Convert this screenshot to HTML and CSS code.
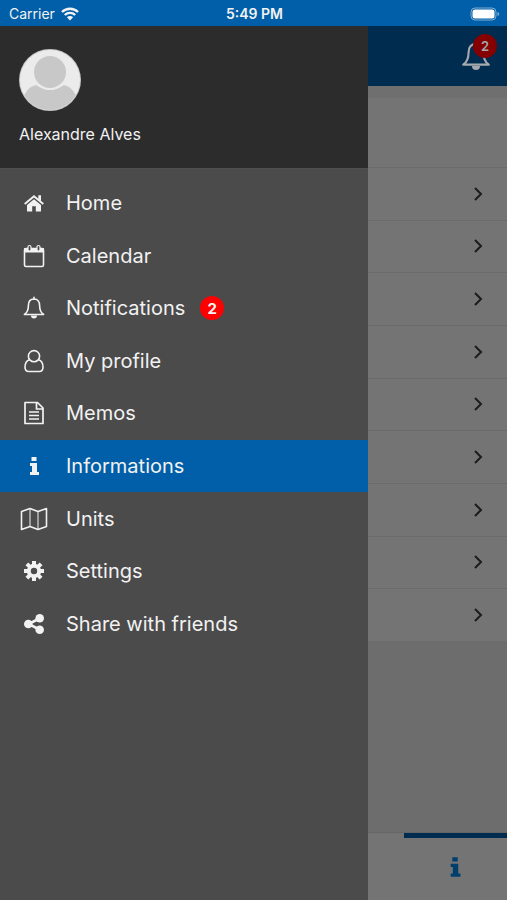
FILE: index.html
```html
<!DOCTYPE html>
<html lang="en">
<head>
    <meta charset="UTF-8">
    <meta name="viewport" content="width=device-width, initial-scale=1.0">
    <title>Informations</title>
    <link rel="stylesheet" href="styles.css">
</head>
<body>
    <!-- Shared icon shapes -->
    <svg class="sprite" aria-hidden="true">
        <symbol id="icon-bell" viewBox="0 0 24 24">
            <path d="M12 1.200v2M12 3c-4 0-5.600 3-5.600 6.500 0 4.500-1 7-4 9h19.200c-3-2-4-4.500-4-9C17.600 6 16 3 12 3z" fill="none" stroke="currentColor" stroke-width="1.600" stroke-linejoin="round" stroke-linecap="round"/>
            <path d="M9 19.500a3 3 0 0 0 6 0z" fill="currentColor"/>
        </symbol>
        <symbol id="icon-info" viewBox="0 0 24 24">
            <path d="M9.500 3h5v4h-5zM8 9h7v9h2v3H8v-3h2v-6H8z" fill="currentColor"/>
        </symbol>
        <symbol id="icon-chevron" viewBox="0 0 10 16">
            <path d="M2 2l6 6-6 6" fill="none" stroke="currentColor" stroke-width="2"/>
        </symbol>
    </svg>

    <div class="status-bar">
        <div class="carrier">
            <span>Carrier</span>
            <svg class="wifi" viewBox="0 0 18 14" aria-hidden="true">
                <path d="M1 5a11.500 11.500 0 0 1 16 0M3.800 8a7.500 7.500 0 0 1 10.400 0" fill="none" stroke="currentColor" stroke-width="2.400"/>
                <path d="M9 13.500L5.900 10.300a4.400 4.400 0 0 1 6.200 0z" fill="currentColor"/>
            </svg>
        </div>
        <div class="time">5:49 PM</div>
        <div class="battery">
            <svg viewBox="0 0 30 14" aria-hidden="true">
                <rect x="1" y="1" width="25" height="12" rx="4" fill="none" stroke="#7fafd4"/>
                <rect x="2.500" y="2.500" width="22" height="9" rx="2.500" fill="#fff"/>
                <path d="M27.500 5v4q1.800-.5 1.800-2t-1.800-2z" fill="#7fafd4"/>
            </svg>
        </div>
    </div>

    <div class="app">
        <aside class="drawer">
            <div class="user">
                <svg class="avatar" viewBox="0 0 62 62" aria-hidden="true">
                    <clipPath id="avatar-clip"><circle cx="31" cy="31" r="30"/></clipPath>
                    <circle cx="31" cy="31" r="31" fill="#c8c8c8"/>
                    <circle cx="31" cy="31" r="30" fill="#ebebeb"/>
                    <g clip-path="url(#avatar-clip)">
                        <path d="M3 52Q7 38 17 36Q31 46 45 36Q55 38 59 52V62H3z" fill="#c8c8c8"/>
                        <circle cx="31" cy="23.500" r="17.500" fill="#ebebeb"/>
                        <circle cx="31" cy="23" r="16" fill="#c8c8c8"/>
                    </g>
                </svg>
                <div class="user-name">Alexandre Alves</div>
            </div>
            <nav class="menu">
                <a href="#home">
                    <svg viewBox="0 0 24 24" aria-hidden="true"><path d="M12 8.200l7 5.800v6.500h-5.200v-5.200h-3.600v5.200H5V14z" fill="currentColor"/><path d="M2.700 13L12 5.300l9.300 7.700" fill="none" stroke="currentColor" stroke-width="1.900"/><path d="M16.300 4.200h2.700v6l-2.700-2.300z" fill="currentColor"/></svg>
                    <span>Home</span>
                </a>
                <a href="#calendar">
                    <svg viewBox="0 0 24 24" aria-hidden="true"><rect x="2.500" y="4.500" width="19" height="18" rx="1.500" fill="none" stroke="currentColor" stroke-width="1.600"/><path d="M2 4h20v4.500H2z" fill="currentColor"/><rect x="6" y="1.500" width="3" height="5.500" rx="1.500" fill="#4b4b4b" stroke="currentColor" stroke-width="1.200"/><rect x="15" y="1.500" width="3" height="5.500" rx="1.500" fill="#4b4b4b" stroke="currentColor" stroke-width="1.200"/></svg>
                    <span>Calendar</span>
                </a>
                <a href="#notifications">
                    <svg aria-hidden="true"><use href="#icon-bell"/></svg>
                    <span>Notifications</span>
                    <b class="badge">2</b>
                </a>
                <a href="#profile">
                    <svg viewBox="0 0 24 24" aria-hidden="true"><g fill="none" stroke="currentColor" stroke-width="1.600"><circle cx="12" cy="7.200" r="5.600"/><path d="M7.600 10.700C4.500 11.500 3 14.500 3 18.300c0 2.600 1.500 4.200 3.800 4.200h10.400c2.300 0 3.800-1.600 3.800-4.200 0-3.800-1.500-6.800-4.600-7.600"/></g></svg>
                    <span>My profile</span>
                </a>
                <a href="#memos">
                    <svg viewBox="0 0 24 24" aria-hidden="true"><g fill="none" stroke="currentColor" stroke-width="1.700" stroke-linejoin="round"><path d="M3 1.500h12.500l5.500 5.500v15.500H3zM14.500 1.500V8H21M7 11h10M7 14.500h10M7 18h10"/></g></svg>
                    <span>Memos</span>
                </a>
                <a href="#informations" class="active" aria-current="page">
                    <svg aria-hidden="true"><use href="#icon-info"/></svg>
                    <span>Informations</span>
                </a>
                <a href="#units">
                    <svg class="wide" viewBox="0 0 28 24" aria-hidden="true"><g fill="none" stroke="currentColor" stroke-linejoin="round"><path d="M1.500 4.500L10 1.500l8 3 8.500-3v18L18 22.500l-8-3-8.500 3z" stroke-width="1.600"/><path d="M10 1.500v18M18 4.500v18" stroke-width="1"/></g></svg>
                    <span>Units</span>
                </a>
                <a href="#settings">
                    <svg viewBox="0 0 24 24" aria-hidden="true"><circle cx="12" cy="12" r="5.200" fill="none" stroke="currentColor" stroke-width="4"/><path d="M12 2v4M12 18v4M2 12h4M18 12h4M4.900 4.900l2.800 2.800M16.300 16.300l2.800 2.800M4.900 19.100l2.800-2.800M16.300 7.700l2.800-2.800" stroke="currentColor" stroke-width="4"/></svg>
                    <span>Settings</span>
                </a>
                <a href="#share">
                    <svg viewBox="0 0 24 24" aria-hidden="true"><path d="M17.500 6.500L6.500 12l11 5.500" fill="none" stroke="currentColor" stroke-width="2.600"/><g fill="currentColor"><circle cx="17.700" cy="6.300" r="4.300"/><circle cx="6.300" cy="12" r="4.300"/><circle cx="17.700" cy="17.700" r="4.300"/></g></svg>
                    <span>Share with friends</span>
                </a>
            </nav>
        </aside>

        <main class="page">
            <header class="top-bar">
                <button class="bell" aria-label="Notifications">
                    <svg aria-hidden="true"><use href="#icon-bell"/></svg>
                    <b class="badge">2</b>
                </button>
            </header>
            <div class="intro"></div>
            <div class="list">
                <a href="#item1" aria-label="Item 1"><svg aria-hidden="true"><use href="#icon-chevron"/></svg></a>
                <a href="#item2" aria-label="Item 2"><svg aria-hidden="true"><use href="#icon-chevron"/></svg></a>
                <a href="#item3" aria-label="Item 3"><svg aria-hidden="true"><use href="#icon-chevron"/></svg></a>
                <a href="#item4" aria-label="Item 4"><svg aria-hidden="true"><use href="#icon-chevron"/></svg></a>
                <a href="#item5" aria-label="Item 5"><svg aria-hidden="true"><use href="#icon-chevron"/></svg></a>
                <a href="#item6" aria-label="Item 6"><svg aria-hidden="true"><use href="#icon-chevron"/></svg></a>
                <a href="#item7" aria-label="Item 7"><svg aria-hidden="true"><use href="#icon-chevron"/></svg></a>
                <a href="#item8" aria-label="Item 8"><svg aria-hidden="true"><use href="#icon-chevron"/></svg></a>
                <a href="#item9" aria-label="Item 9"><svg aria-hidden="true"><use href="#icon-chevron"/></svg></a>
            </div>
            <footer class="tabs">
                <a href="#informations" aria-label="Informations"><svg aria-hidden="true"><use href="#icon-info"/></svg></a>
            </footer>
        </main>
    </div>
</body>
</html>
```
FILE: styles.css
```css
* {
    box-sizing: border-box;
}
body {
    margin: 0;
    min-height: 100vh;
    display: flex;
    flex-direction: column;
    font-family: Inter, Roboto, sans-serif;
    color: #f2f2f2;
    background-color: #4b4b4b;
}
a {
    color: inherit;
    text-decoration: none;
}
svg {
    display: block;
}
.sprite {
    position: absolute;
    width: 0;
    height: 0;
}

/* Status bar */
.status-bar {
    display: grid;
    grid-template-columns: 1fr auto 1fr;
    align-items: center;
    height: 26px;
    padding: 1px 7px 0 9px;
    background-color: #005fa8;
    font-size: 14px;
}
.carrier {
    display: flex;
    align-items: center;
    gap: 6px;
}
.wifi {
    width: 18px;
    height: 14px;
}
.time {
    font-weight: 600;
}
.battery {
    display: flex;
    justify-content: flex-end;
}
.battery svg {
    width: 30px;
    height: 14px;
}

.app {
    flex: 1;
    display: flex;
}

/* Drawer */
.drawer {
    flex: 0 0 auto;
    width: 72.500%;
}
.user {
    height: 143px;
    padding: 23px 19px;
    background-color: #2c2c2c;
    border-bottom: 1px solid #505050;
}
.avatar {
    width: 62px;
    height: 62px;
}
.user-name {
    margin-top: 13px;
    font-size: 16px;
    line-height: 20px;
}
.menu {
    display: grid;
    grid-auto-rows: 1fr;
    height: 473px;
    margin-top: 8px;
}
.menu a {
    display: flex;
    align-items: center;
    padding-left: 20px;
    font-size: 20px;
}
.menu svg {
    width: 24px;
    height: 24px;
    margin: 0 20px 0 2px;
}
.menu .wide {
    width: 28px;
    margin: 0 18px 0 0;
}
.menu .active {
    background-color: #005fa8;
}
.badge {
    display: flex;
    align-items: center;
    justify-content: center;
    width: 24px;
    height: 24px;
    border-radius: 50%;
    background-color: #f00;
    font-size: 15px;
    font-weight: 700;
}
.menu .badge {
    margin-left: 15px;
}

/* Page behind the drawer, dimmed */
.page {
    flex: 1;
    display: flex;
    flex-direction: column;
    background-color: #6d6d6d;
}
.top-bar {
    display: flex;
    align-items: center;
    justify-content: flex-end;
    height: 60px;
    padding-right: 15px;
    background-color: #002c50;
}
.bell {
    position: relative;
    padding: 0;
    border: 0;
    background: none;
    font-family: inherit;
    color: #a5a9ad;
}
.bell svg {
    width: 32px;
    height: 32px;
}
.bell .badge {
    position: absolute;
    top: -6px;
    right: -5px;
    background-color: #850000;
    font-size: 13px;
    font-weight: 600;
}
.intro {
    height: 81px;
    border-top: 12px solid #6f6f6f;
    background-color: #747474;
}
.list {
    display: grid;
    grid-auto-rows: 1fr;
    height: 474px;
}
.list a {
    display: flex;
    align-items: center;
    justify-content: flex-end;
    padding-right: 24px;
    border-top: 1px solid #6b6b6b;
    background-color: #747474;
    color: #1c1c1c;
}
.list svg {
    width: 10px;
    height: 16px;
}
.tabs {
    display: flex;
    justify-content: flex-end;
    height: 68px;
    margin-top: auto;
    border-top: 1px solid #666;
    background-color: #747474;
}
.tabs a {
    display: flex;
    align-items: center;
    justify-content: center;
    width: 74%;
    padding-bottom: 5px;
    border-top: 5px solid #002c50;
    color: #003f6c;
}
.tabs svg {
    width: 26px;
    height: 26px;
}
```
